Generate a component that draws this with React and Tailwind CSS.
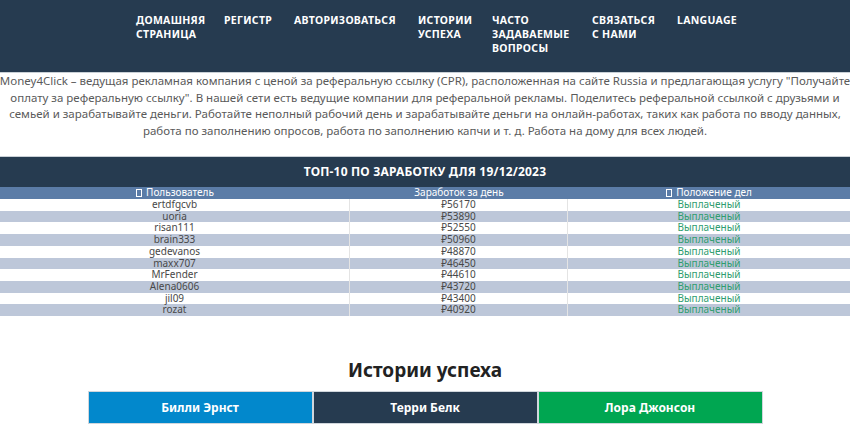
import React from "react";

const NAV = [
  { w: "w-[88px]", lines: ["Домашняя", "страница"] },
  { w: "w-[70px]", lines: ["Регистр"] },
  { w: "w-[124px]", lines: ["Авторизоваться"] },
  { w: "w-[74px]", lines: ["Истории", "успеха"] },
  { w: "w-[100px]", lines: ["Часто", "задаваемые", "вопросы"] },
  { w: "w-[85px]", lines: ["Связаться", "с нами"] },
  { w: "w-[70px]", lines: ["Language"] },
];

const INTRO = [
  'Money4Click – ведущая рекламная компания с ценой за реферальную ссылку (CPR), расположенная на сайте Russia и предлагающая услугу "Получайте',
  'оплату за реферальную ссылку". В нашей сети есть ведущие компании для реферальной рекламы. Поделитесь реферальной ссылкой с друзьями и',
  "семьей и зарабатывайте деньги. Работайте неполный рабочий день и зарабатывайте деньги на онлайн-работах, таких как работа по вводу данных,",
  "работа по заполнению опросов, работа по заполнению капчи и т. д. Работа на дому для всех людей.",
];

const TOP = [
  ["ertdfgcvb", "₽56170"],
  ["uoria", "₽53890"],
  ["risan111", "₽52550"],
  ["brain333", "₽50960"],
  ["gedevanos", "₽48870"],
  ["maxx707", "₽46450"],
  ["MrFender", "₽44610"],
  ["Alena0606", "₽43720"],
  ["jil09", "₽43400"],
  ["rozat", "₽40920"],
];

const Tofu = () => (
  <span className="inline-block w-[6px] h-[8px] border border-white mr-[4px] align-[-1px]" />
);

export default function App() {
  return (
    <div className="w-[850px] h-[426px] overflow-hidden bg-white font-['Noto_Sans',sans-serif] text-[#555]">
      {/* Top navigation */}
      <header className="h-[73px] bg-[#263b50] border-b border-[#c9d0d6] pl-[136px] pt-[13px]">
        <nav className="flex">
          {NAV.map((item) => (
            <a
              key={item.lines[0]}
              className={`${item.w} text-white font-bold uppercase text-[10.5px] leading-[14px] tracking-[0.3px]`}
            >
              {item.lines.map((l) => (
                <div key={l}>{l}</div>
              ))}
            </a>
          ))}
        </nav>
      </header>

      {/* Intro text */}
      <div className="flex flex-col items-center text-[11.5px] leading-[16.5px] text-[#5a5a5a]">
        {INTRO.map((line) => (
          <p key={line} className="whitespace-nowrap">
            {line}
          </p>
        ))}
      </div>

      {/* Top 10 table */}
      <div className="mt-[17px] h-[31px] bg-[#263b50] border-t border-[#c9d0d6] flex items-center justify-center">
        <h3 className="text-white font-bold uppercase text-[12px] tracking-[0.2px]">
          Топ-10 по заработку для 19/12/2023
        </h3>
      </div>
      <div className="text-[10px] leading-[11.7px]">
        <div className="grid grid-cols-[350px_218px_1fr] bg-[#5b7ca7] text-white h-[12px] text-center">
          <div>
            <Tofu />
            Пользователь
          </div>
          <div>Заработок за день</div>
          <div>
            <Tofu />
            Положение дел
          </div>
        </div>
        {TOP.map(([name, sum], i) => (
          <div
            key={name}
            className={`grid grid-cols-[350px_218px_1fr] text-center text-[#484848] ${
              i % 2 ? "bg-[#bdc7d9]" : "bg-white"
            }`}
          >
            <div className="border-r border-[#e4e4e4]">{name}</div>
            <div className="border-r border-[#e4e4e4]">{sum}</div>
            <div className="text-[#2f9d6f]">Выплаченый</div>
          </div>
        ))}
      </div>

      {/* Success stories */}
      <h2 className="mt-[43px] text-center text-[19px] leading-[22px] font-bold text-[#222]">
        Истории успеха
      </h2>
      <div className="mt-[10px] mx-auto w-[675px] grid grid-cols-3 text-white font-bold text-[12px]">
        <button className="h-[33px] bg-[#0288cc] border border-[#d0d6dc]">Билли Эрнст</button>
        <button className="h-[33px] bg-[#263b50] border border-[#d0d6dc]">Терри Белк</button>
        <button className="h-[33px] bg-[#00a651] border border-[#d0d6dc]">Лора Джонсон</button>
      </div>
    </div>
  );
}
